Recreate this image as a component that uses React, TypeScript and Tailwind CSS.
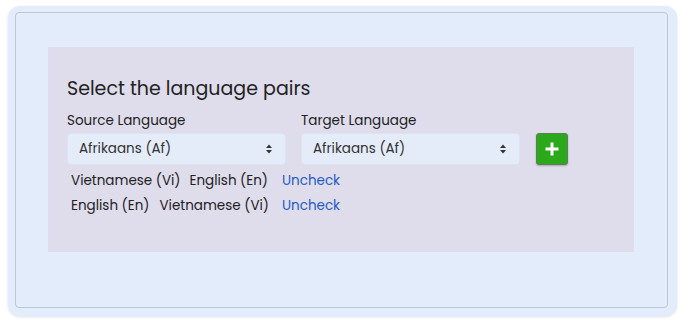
import React from "react";

function Updown() {
  return (
    <svg width="8" height="12" viewBox="0 0 8 12" className="shrink-0">
      <path d="M4 1.5 L7 5 L1 5 Z" fill="#333" />
      <path d="M4 10.5 L7 7 L1 7 Z" fill="#333" />
    </svg>
  );
}

function Select({ label }: { label: string }) {
  return (
    <div className="flex flex-col w-[219px]">
      <div className="text-[13.5px] leading-[20px] text-[#222] mb-[2px]">{label}</div>
      <div className="h-[32px] rounded-[4px] bg-[#e5ecf9] border border-[#dde3f0] flex items-center justify-between pl-[11px] pr-[12px] text-[13.5px] text-[#333]">
        <span>Afrikaans (Af)</span>
        <Updown />
      </div>
    </div>
  );
}

export default function App() {
  return (
    <div className="w-[688px] h-[322px] bg-white pt-[6px] pl-[8px]" style={{ fontFamily: "Poppins, Inter, 'Noto Sans', sans-serif" }}>
      <div className="w-[669px] h-[310px] rounded-[12px] bg-[#e3ecfb] pt-[6px] pl-[7px] shadow-[0_1px_3px_rgba(150,170,210,0.35)]">
        <div className="w-[653px] h-[296px] rounded-[4px] border border-[#bfc6d3] pt-[34px] pl-[32px]">
          <div className="w-[586px] h-[205px] bg-[#dfdcec] pt-[28px] pl-[19px]">
            <div className="text-[19px] leading-[28px] text-[#222]">Select the language pairs</div>
            <div className="flex items-end gap-[15px] mt-[8px]">
              <Select label="Source Language" />
              <Select label="Target Language" />
              <div className="w-[32px] h-[32px] rounded-[3px] bg-[#2ca81d] border border-[#5d7f57] flex items-center justify-center ml-[1px] shadow-[0_1px_2px_rgba(0,0,0,0.25)]">
                <svg width="16" height="16" viewBox="0 0 16 16">
                  <path d="M8 1.5 V14.5 M1.5 8 H14.5" stroke="#fff" strokeWidth="3" />
                </svg>
              </div>
            </div>
            <div className="pl-[4px] mt-[4px] text-[13.5px] leading-[24px] text-[#222]">
              <div className="flex">
                <span className="mr-[9px]">Vietnamese (Vi)</span>
                <span className="mr-[14px]">English (En)</span>
                <span className="text-[#1f5bc6]">Uncheck</span>
              </div>
              <div className="flex mt-[1px]">
                <span className="mr-[10px]">English (En)</span>
                <span className="mr-[13px]">Vietnamese (Vi)</span>
                <span className="text-[#1f5bc6]">Uncheck</span>
              </div>
            </div>
          </div>
        </div>
      </div>
    </div>
  );
}
